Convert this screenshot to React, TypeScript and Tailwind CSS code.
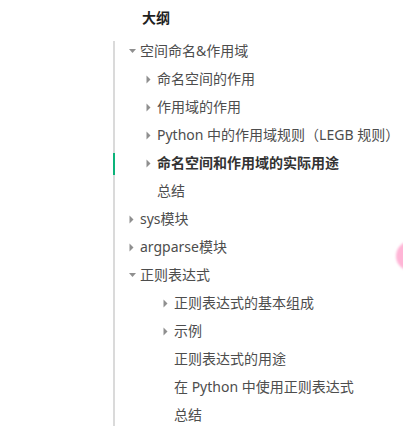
import React from 'react'

type Item = {
    label: string
    level: 1 | 2 | 3
    arrow?: 'right' | 'down'
    active?: boolean
}

const items: Item[] = [
    { label: '空间命名&作用域', level: 1, arrow: 'down' },
    { label: '命名空间的作用', level: 2, arrow: 'right' },
    { label: '作用域的作用', level: 2, arrow: 'right' },
    { label: 'Python 中的作用域规则（LEGB 规则）', level: 2, arrow: 'right' },
    { label: '命名空间和作用域的实际用途', level: 2, arrow: 'right', active: true },
    { label: '总结', level: 2 },
    { label: 'sys模块', level: 1, arrow: 'right' },
    { label: 'argparse模块', level: 1, arrow: 'right' },
    { label: '正则表达式', level: 1, arrow: 'down' },
    { label: '正则表达式的基本组成', level: 3, arrow: 'right' },
    { label: '示例', level: 3, arrow: 'right' },
    { label: '正则表达式的用途', level: 3 },
    { label: '在 Python 中使用正则表达式', level: 3 },
    { label: '总结', level: 3 },
]

function Arrow({ dir }: { dir?: 'right' | 'down' }) {
    return (
        <span className="w-[11px] h-[20px] flex items-center shrink-0">
            {dir === 'right' && (
                <svg width="6" height="9" viewBox="0 0 6 9">
                    <polygon points="0.5,0.5 4.5,4.5 0.5,8.5" fill="#8f8f8f" />
                </svg>
            )}
            {dir === 'down' && (
                <svg width="8" height="6" viewBox="0 0 8 6">
                    <polygon points="0,1 7,1 3.5,5" fill="#8f8f8f" />
                </svg>
            )}
        </span>
    )
}

export default function App() {
    return (
        <div className="relative w-[403px] h-[443px] bg-white overflow-hidden font-['Noto_Sans','Noto_Sans_CJK_SC',sans-serif] text-[14px] text-[#4d4d4d]">
            <div className="h-[41px] pt-[8px] pl-[142px]">
                <span className="block leading-[20px] font-bold text-[#1f1f1f]">大纲</span>
            </div>

            <div className="ml-[113px] h-[385px] border-l-2 border-[#dadada]">
                {items.map((item, i) => (
                    <div
                        key={i}
                        className={`relative flex h-[28px] items-start ${
                            item.level === 1 ? 'pl-[14px]' : item.level === 2 ? 'pl-[31px]' : 'pl-[48px]'
                        }`}
                    >
                        {item.active && (
                            <span className="absolute left-[-2px] top-0 h-[22px] w-[2px] bg-[#0cb37a]" />
                        )}
                        <Arrow dir={item.arrow} />
                        <span
                            className={`leading-[20px] whitespace-nowrap ${
                                item.active ? 'font-bold text-[#333]' : ''
                            }`}
                        >
                            {item.label}
                        </span>
                    </div>
                ))}
            </div>

            {/* floating pink bubble at the edge */}
            <div className="absolute left-[396px] top-[241px] w-[30px] h-[30px] rounded-full bg-[#ffb5d6] blur-[1px]" />
        </div>
    )
}
